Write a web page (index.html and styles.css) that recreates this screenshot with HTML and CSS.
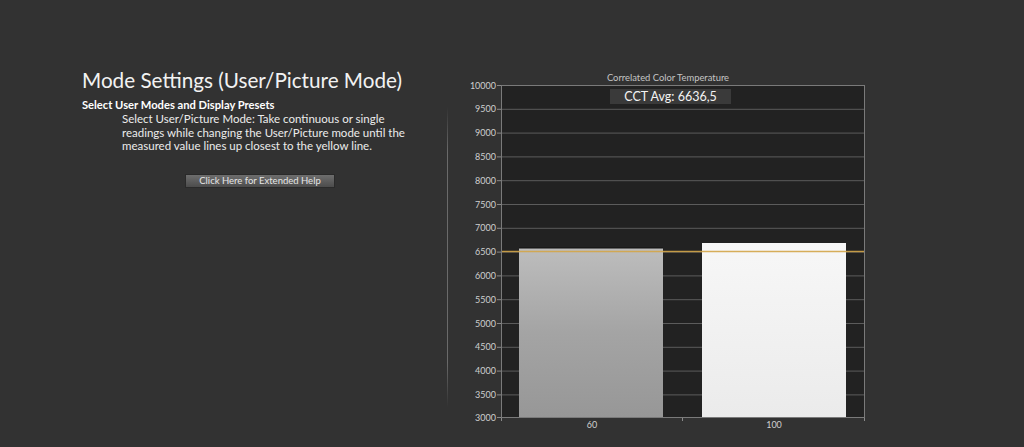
FILE: index.html
```html
<!DOCTYPE html>
<html lang="en">
<head>
<meta charset="utf-8">
<title>Mode Settings</title>
<link rel="stylesheet" href="styles.css">
</head>
<body>
<div class="page">
  <section class="info">
    <h1 class="title">Mode Settings (User/Picture Mode)</h1>
    <h2 class="subtitle">Select User Modes and Display Presets</h2>
    <p class="desc">Select User/Picture Mode: Take continuous or single readings while changing the User/Picture mode until the measured value lines up closest to the yellow line.</p>
    <div class="btn-row"><button class="help-btn">Click Here for Extended Help</button></div>
  </section>
  <div class="divider"></div>
  <svg class="chart" viewBox="448 0 576 447" width="576" height="447" xmlns="http://www.w3.org/2000/svg">
    <defs>
      <linearGradient id="g1" x1="0" y1="0" x2="0" y2="1">
        <stop offset="0" stop-color="#bdbdbd"/>
        <stop offset="0.5" stop-color="#a4a4a4"/>
        <stop offset="1" stop-color="#979797"/>
      </linearGradient>
      <linearGradient id="g2" x1="0" y1="0" x2="0" y2="1">
        <stop offset="0" stop-color="#f7f7f7"/>
        <stop offset="1" stop-color="#ebebeb"/>
      </linearGradient>
    </defs>
    <text class="ctitle" x="668" y="81" text-anchor="middle">Correlated Color Temperature</text>
    <rect x="501.5" y="85.5" width="363" height="332" fill="#222222"/>
    <g class="grid">
      <line x1="501" x2="865" y1="109.3" y2="109.3"/>
      <line x1="501" x2="865" y1="133.1" y2="133.1"/>
      <line x1="501" x2="865" y1="156.9" y2="156.9"/>
      <line x1="501" x2="865" y1="180.7" y2="180.7"/>
      <line x1="501" x2="865" y1="204.5" y2="204.5"/>
      <line x1="501" x2="865" y1="228.3" y2="228.3"/>
      <line x1="501" x2="865" y1="252.1" y2="252.1"/>
      <line x1="501" x2="865" y1="275.9" y2="275.9"/>
      <line x1="501" x2="865" y1="299.7" y2="299.7"/>
      <line x1="501" x2="865" y1="323.5" y2="323.5"/>
      <line x1="501" x2="865" y1="347.3" y2="347.3"/>
      <line x1="501" x2="865" y1="371.1" y2="371.1"/>
      <line x1="501" x2="865" y1="394.9" y2="394.9"/>
    </g>
    <g class="ticks">
      <line x1="497" x2="501" y1="85.5" y2="85.5"/>
      <line x1="497" x2="501" y1="109.3" y2="109.3"/>
      <line x1="497" x2="501" y1="133.1" y2="133.1"/>
      <line x1="497" x2="501" y1="156.9" y2="156.9"/>
      <line x1="497" x2="501" y1="180.7" y2="180.7"/>
      <line x1="497" x2="501" y1="204.5" y2="204.5"/>
      <line x1="497" x2="501" y1="228.3" y2="228.3"/>
      <line x1="497" x2="501" y1="252.1" y2="252.1"/>
      <line x1="497" x2="501" y1="275.9" y2="275.9"/>
      <line x1="497" x2="501" y1="299.7" y2="299.7"/>
      <line x1="497" x2="501" y1="323.5" y2="323.5"/>
      <line x1="497" x2="501" y1="347.3" y2="347.3"/>
      <line x1="497" x2="501" y1="371.1" y2="371.1"/>
      <line x1="497" x2="501" y1="394.9" y2="394.9"/>
      <line x1="497" x2="501" y1="417.5" y2="417.5"/>
      <line x1="501.5" x2="501.5" y1="417" y2="421"/>
      <line x1="682.5" x2="682.5" y1="417" y2="421"/>
      <line x1="864.5" x2="864.5" y1="417" y2="421"/>
    </g>
    <g class="ylabels" text-anchor="end">
      <text x="496" y="88.5">10000</text>
      <text x="496" y="112.3">9500</text>
      <text x="496" y="136.1">9000</text>
      <text x="496" y="159.9">8500</text>
      <text x="496" y="183.7">8000</text>
      <text x="496" y="207.5">7500</text>
      <text x="496" y="231.3">7000</text>
      <text x="496" y="255.1">6500</text>
      <text x="496" y="278.9">6000</text>
      <text x="496" y="302.7">5500</text>
      <text x="496" y="326.5">5000</text>
      <text x="496" y="350.3">4500</text>
      <text x="496" y="374.1">4000</text>
      <text x="496" y="397.9">3500</text>
      <text x="496" y="421">3000</text>
    </g>
    <rect x="519" y="248" width="144" height="169.5" fill="url(#g1)"/>
    <line x1="519" x2="663" y1="248" y2="248" stroke="#111" stroke-width="1"/>
    <rect x="702" y="243" width="144" height="174.5" fill="url(#g2)"/>
    <line x1="501" x2="865" y1="251.5" y2="251.5" stroke="#d3a548" stroke-width="1.6" stroke-opacity="0.9"/>
    <rect class="frame" x="501.5" y="85.5" width="363" height="332"/>
    <g class="xlabels" text-anchor="middle">
      <text x="592" y="428">60</text>
      <text x="774" y="428">100</text>
    </g>
    <rect x="610" y="89" width="121" height="15" fill="#3a3a3a"/>
    <text class="avg" x="670.5" y="101" text-anchor="middle">CCT Avg: 6636,5</text>
  </svg>
</div>
</body>
</html>
```

FILE: styles.css
```css
html, body {
  margin: 0;
  padding: 0;
  background: #323232;
}

body {
  font-family: "Lato", "Liberation Sans", sans-serif;
  color: #eeeeee;
}

.page {
  display: flex;
  width: 1024px;
  height: 447px;
  overflow: hidden;
}

.info {
  width: 447px;
  box-sizing: border-box;
  padding: 68px 0 0 82px;
  flex: none;
}

.title {
  margin: 0;
  font-size: 20.7px;
  font-weight: 400;
  line-height: 25px;
  color: #f2f2f2;
}

.subtitle {
  margin: 5px 0 0 0;
  font-size: 11.2px;
  font-weight: 700;
  line-height: 14px;
  color: #ffffff;
}

.desc {
  margin: 0 0 0 40px;
  width: 290px;
  font-size: 11.5px;
  line-height: 13.7px;
  color: #ececec;
}

.btn-row {
  margin-top: 21px;
  padding-left: 103px;
}

.help-btn {
  display: block;
  width: 150px;
  height: 14px;
  padding: 0;
  border: 1px solid #2a2a2a;
  background: linear-gradient(#6e6e6e, #4c4c4c);
  color: #e6e6e6;
  font-family: "Lato", "Liberation Sans", sans-serif;
  font-size: 9.5px;
  line-height: 12px;
  text-align: center;
}

.divider {
  flex: none;
  width: 1px;
  height: 300px;
  margin-top: 107px;
  background: linear-gradient(rgba(120,120,120,0), #6a6a6a 15%, #6a6a6a 85%, rgba(120,120,120,0));
}

.chart {
  flex: none;
  display: block;
  font-family: "Lato", "Liberation Sans", sans-serif;
}

.chart .grid line {
  stroke: #5c5c5c;
  stroke-width: 1;
}

.chart .ticks line {
  stroke: #8a8a8a;
  stroke-width: 1;
}

.chart .frame {
  fill: none;
  stroke: #7a7a7a;
  stroke-width: 1;
}

.chart .ylabels text,
.chart .xlabels text {
  font-size: 9px;
  fill: #cfcfcf;
}

.chart .ctitle {
  font-size: 9.4px;
  fill: #c4c4c4;
}

.chart .avg {
  font-size: 12.5px;
  fill: #f4f4f4;
}
```
